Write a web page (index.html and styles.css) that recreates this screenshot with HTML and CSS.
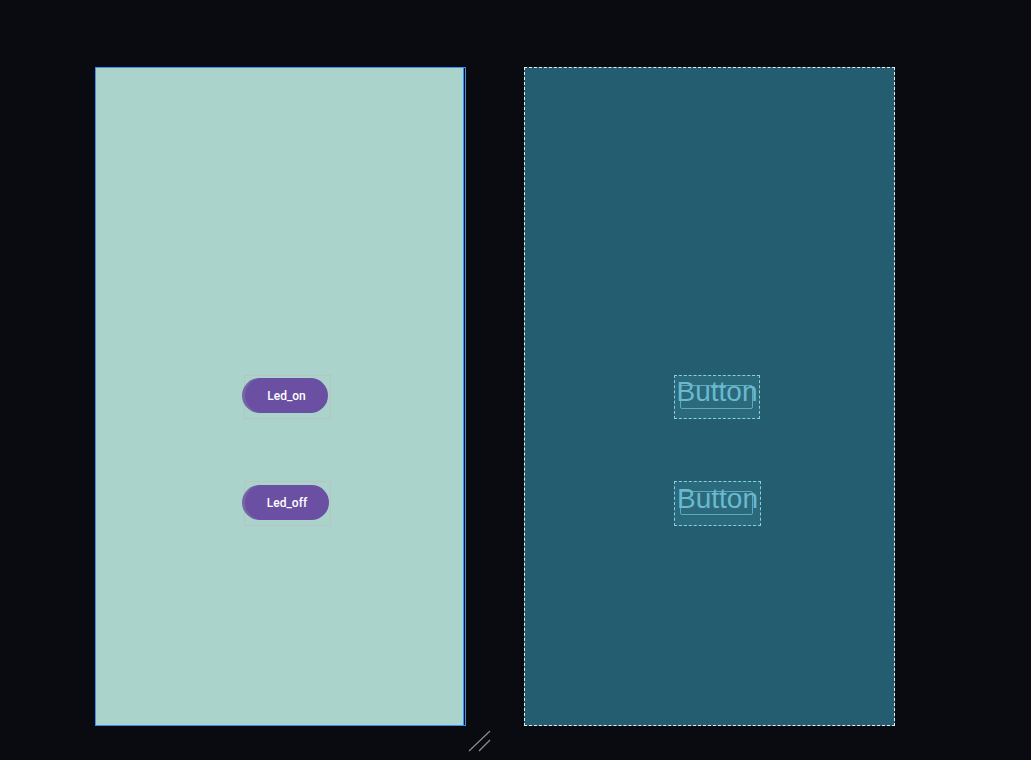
FILE: index.html
```html
<!DOCTYPE html>
<html>
<head>
<meta charset="utf-8">
<link rel="stylesheet" href="styles.css">
</head>
<body>
<div class="canvas">
  <div class="design-frame">
    <div class="design-fill">
      <div class="stack">
        <div class="widget-box">
          <span class="pill-ghost"></span>
          <div class="pill">Led_on</div>
        </div>
        <div class="widget-box widget-box-2">
          <span class="pill-ghost"></span>
          <div class="pill pill-wide">Led_off</div>
        </div>
      </div>
    </div>
  </div>
  <div class="blueprint-frame">
    <div class="stack">
      <div class="bp-box">
        <span class="bp-inner"></span>
        <span class="bp-text">Button</span>
      </div>
      <div class="bp-box bp-box-2">
        <span class="bp-inner"></span>
        <span class="bp-text">Button</span>
      </div>
    </div>
  </div>
</div>
<svg class="resize-handle" width="24" height="24" viewBox="0 0 24 24">
  <line x1="1" y1="21" x2="22" y2="1" stroke="#8a8d93" stroke-width="1.2"/>
  <line x1="11" y1="21" x2="22" y2="10" stroke="#8a8d93" stroke-width="1.2"/>
</svg>
</body>
</html>
```
FILE: styles.css
```css
html, body {
  margin: 0;
  padding: 0;
  background: #0a0b10;
  width: 1031px;
  height: 760px;
  overflow: hidden;
  font-family: Roboto, "Liberation Sans", sans-serif;
}

.canvas {
  display: flex;
  gap: 58px;
  padding: 67px 0 0 95px;
}

.design-frame {
  width: 369px;
  height: 657px;
  border: 1px solid #3b8ff2;
  background: #0a0b10;
  display: flex;
}

.design-fill {
  flex: 1;
  margin-right: 1px;
  background: #aad3cb;
  border-right: 1px solid #3b8ff2;
}

.stack {
  display: flex;
  flex-direction: column;
  align-items: flex-start;
  gap: 62px;
  padding: 307px 0 0 148px;
}

.widget-box {
  position: relative;
  width: 85px;
  height: 42px;
  border: 1px solid #b9c4c1;
  display: flex;
  align-items: flex-start;
}

.widget-box-2 {
  height: 43px;
}

.pill {
  position: relative;
  width: 83px;
  height: 35px;
  margin-top: 2px;
  border-radius: 18px;
  background: #6a4fa3;
  color: #ffffff;
  font-size: 12px;
  font-weight: 500;
  display: flex;
  align-items: center;
  justify-content: center;
}

.widget-box-2 .pill {
  margin-top: 3px;
}

.pill-wide {
  width: 84px;
}

.pill-ghost {
  position: absolute;
  left: -3px;
  top: 2px;
  width: 40px;
  height: 35px;
  border-radius: 18px 0 0 18px;
  background: #7565a6;
}

.widget-box-2 .pill-ghost {
  top: 3px;
}

.blueprint-frame {
  width: 369px;
  height: 657px;
  border: 1px dashed #e6eef0;
  background: #235d6f;
}

.blueprint-frame .stack {
  gap: 62px;
  padding-left: 149px;
}

.bp-box {
  position: relative;
  width: 84px;
  height: 42px;
  border: 1px dashed #86d0e2;
  background: #2b6a7c;
  display: flex;
  align-items: center;
  justify-content: center;
}

.bp-box-2 {
  width: 85px;
  height: 43px;
}

.bp-inner {
  position: absolute;
  left: 5px;
  top: 9px;
  width: 71px;
  height: 22px;
  border: 1px solid #5fa9bd;
  border-radius: 2px;
}

.bp-text {
  position: relative;
  font-family: "Liberation Sans", Arial, sans-serif;
  font-size: 28px;
  line-height: 28px;
  color: #6ab9ce;
  margin-top: -10px;
}

.resize-handle {
  position: absolute;
  left: 468px;
  top: 730px;
}
```
